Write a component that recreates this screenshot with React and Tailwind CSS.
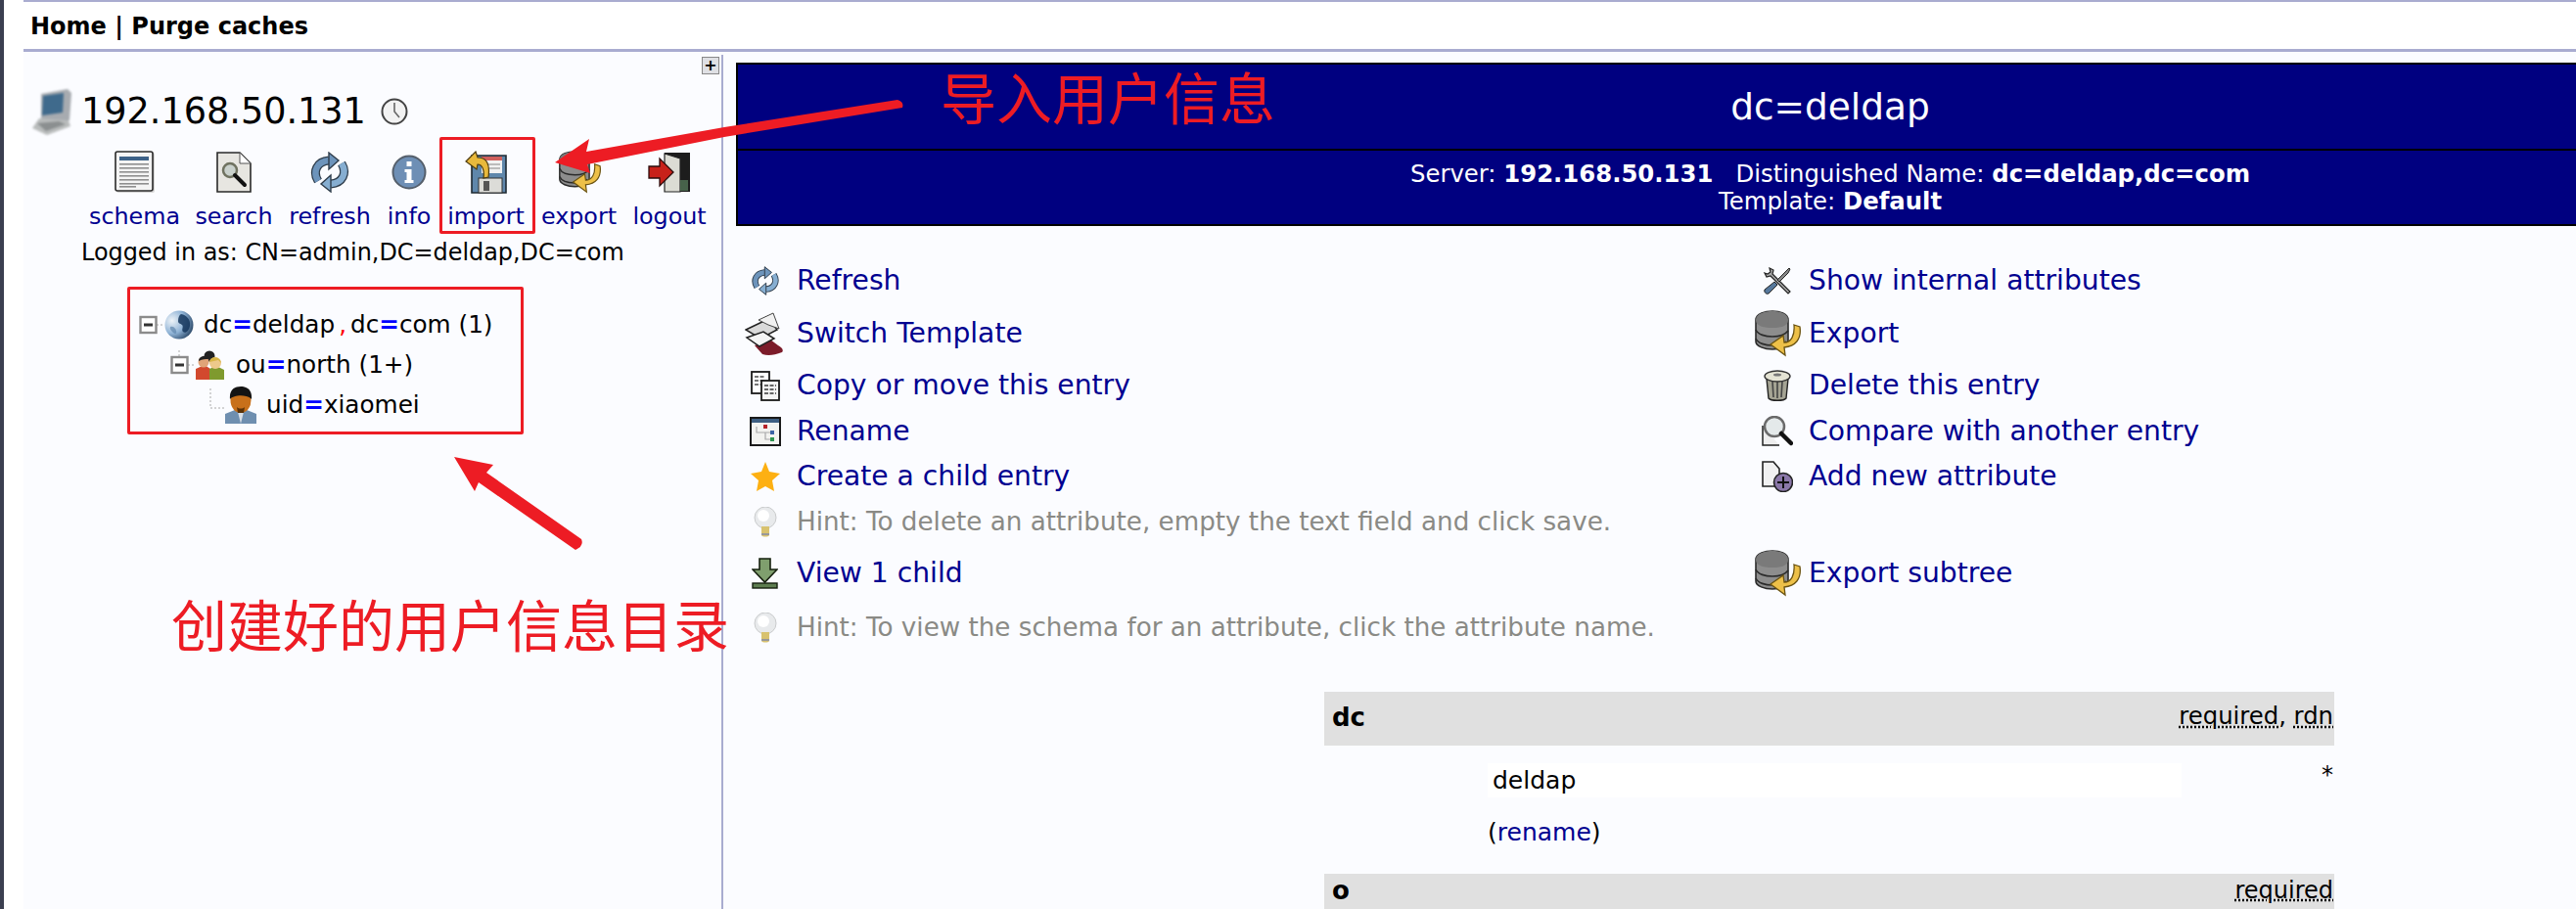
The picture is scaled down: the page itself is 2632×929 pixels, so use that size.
const red = '#ed1c24';

const Schema = () => (
  <svg width="42" height="44" viewBox="0 0 42 44">
    <rect x="2" y="2" width="39" height="41" rx="2" fill="#d8d8d8" />
    <rect x="1" y="1" width="38" height="40" rx="2" fill="#f4f4f4" stroke="#2a2a2a" strokeWidth="1.6" />
    <rect x="5" y="6" width="30" height="4" fill="#3d6288" />
    {[13, 17, 21, 25, 29, 33].map(y => <rect key={y} x="5" y={y} width="30" height="1.6" fill="#8f8f8f" />)}
    <rect x="5" y="36" width="17" height="1.6" fill="#8f8f8f" />
  </svg>
);

const Search = () => (
  <svg width="38" height="44" viewBox="0 0 38 44">
    <path d="M2 2h23l11 11v29H2z" fill="#e7e6e1" stroke="#2a2a2a" strokeWidth="1.6" />
    <path d="M25 2v11h11z" fill="#fff" stroke="#555" strokeWidth="1" />
    <circle cx="15" cy="20" r="7" fill="#c9d1cc" stroke="#6f7260" strokeWidth="2.5" />
    <path d="M20 25l10 10" stroke="#111" strokeWidth="4" strokeLinecap="round" />
  </svg>
);

const Refresh = ({ size = 42 }) => (
  <svg width={size} height={size} viewBox="0 0 42 42">
    <g fill="none" strokeLinecap="butt">
      <path d="M9 30C3 20 8 10 20 9" stroke="#2f3d4b" strokeWidth="9" />
      <path d="M33 12C39 22 34 32 22 33" stroke="#2f3d4b" strokeWidth="9" />
      <path d="M9 30C3 20 8 10 20 9" stroke="#6d94bb" strokeWidth="6.500" />
      <path d="M33 12C39 22 34 32 22 33" stroke="#86aed1" strokeWidth="6.500" />
    </g>
    <path d="M20 1l10 8-10 9z" fill="#6d94bb" stroke="#2f3d4b" strokeWidth="1.4" />
    <path d="M22 24l-10 9 10 8z" fill="#86aed1" stroke="#2f3d4b" strokeWidth="1.4" />
  </svg>
);

const Info = () => (
  <svg width="36" height="36" viewBox="0 0 36 36">
    <circle cx="18" cy="18" r="16.5" fill="#6e8fb5" stroke="#555f6b" strokeWidth="2" />
    <rect x="15.500" y="7" width="5" height="5" fill="#fff" />
    <path d="M13.500 15h7v11h2v3h-9v-3h2v-8h-2z" fill="#fff" />
  </svg>
);

const Import = () => (
  <svg width="44" height="44" viewBox="0 0 44 44">
    <path d="M7 5h35v38H7z" fill="#5f87ab" stroke="#1f2a33" strokeWidth="1.6" />
    <rect x="17" y="6" width="21" height="17" fill="#f2f2f2" />
    <rect x="17" y="6" width="21" height="4" fill="#d0605c" />
    <path d="M19 14h17M19 18h17" stroke="#aaa" strokeWidth="1.4" />
    <rect x="14" y="28" width="24" height="15" fill="#dcdcd8" stroke="#333" />
    <rect x="19" y="31" width="6" height="10" fill="#555" />
    <path d="M1 11L11 1l2 6c9 0 13 6 11 20l-5 1c1-8-1-14-6-14l-1 5z" fill="#e9b93c" stroke="#4d3b10" strokeWidth="1.2" />
  </svg>
);

// database cylinder with the yellow arrow, used in toolbar and action list
const Export = ({ size = 44 }) => (
  <svg width={size} height={size} viewBox="0 0 48 48">
    <path d="M2 10C2 3 12 1 19 1s16 2 16 9v22c0 5-8 8-16 8S2 37 2 32z" fill="#8d8d8d" stroke="#2b2b2b" strokeWidth="1.6" />
    <path d="M2 20c2 5 10 7 17 7s13-2 16-6M2 29c2 5 10 7 17 7s11-1 14-4" fill="none" stroke="#2b2b2b" strokeWidth="1.6" />
    <path d="M2 10c0-7 10-9 17-9s16 2 16 9-9 8-16 8S2 17 2 10z" fill="#7a7a7a" />
    <path d="M41 15l6 2c2 13-5 20-16 21l1 8-15-11 13-9 1 7c7 0 11-7 10-18z" fill="#edc048" stroke="#6a5312" strokeWidth="1.3" />
  </svg>
);

const Logout = () => (
  <svg width="44" height="44" viewBox="0 0 44 44">
    <rect x="17" y="2" width="26" height="40" fill="#1d1d1d" />
    <path d="M17 3l16 5v34H17z" fill="#dcdcd4" stroke="#222" strokeWidth="1.2" />
    <path d="M33 30h8v11h-8z" fill="#47624a" />
    <path d="M1 16h11V8l14 14-14 14v-8H1z" fill="#c8211a" stroke="#2a0c0c" strokeWidth="1.3" />
  </svg>
);

const Computer = () => (
  <svg width="42" height="48" viewBox="0 0 42 48" className="blur-[1px]">
    <path d="M10 6l27-5 4 4-2 28-29 2z" fill="#a7abb0" />
    <path d="M12 8l21-3-1 20-21 3z" fill="#3f6a8c" />
    <path d="M8 31l30 2 2 6-24 9L1 41z" fill="#b9bcbc" />
    <path d="M6 36l22-2 7 3-20 7z" fill="#8b8f90" />
  </svg>
);

const Clock = () => (
  <svg width="28" height="28" viewBox="0 0 28 28">
    <circle cx="14" cy="14" r="12.500" fill="#f2f2f2" stroke="#444" strokeWidth="2" />
    <path d="M14 5v9l5 6" fill="none" stroke="#666" strokeWidth="1.6" />
  </svg>
);

const Expander = ({ stem }) => (
  <svg width="26" height="30" viewBox="0 0 26 30" className="shrink-0">
    {stem && <path d="M9 0v7" stroke="#aaa" strokeDasharray="2 2" />}
    <path d="M18 15h8" stroke="#aaa" strokeDasharray="2 2" />
    <rect x="1.500" y="7" width="16" height="16" fill="#fff" stroke="#8b8b8b" strokeWidth="2.400" />
    <rect x="5" y="13.500" width="9" height="3" fill="#333" />
  </svg>
);

const Globe = () => (
  <svg width="30" height="30" viewBox="0 0 30 30" className="shrink-0 blur-[0.6px]">
    <defs>
      <radialGradient id="globe" cx="0.25" cy="0.35" r="0.9">
        <stop offset="0" stopColor="#eef3f8" />
        <stop offset="0.5" stopColor="#8fb3d6" />
        <stop offset="1" stopColor="#0f2a4a" />
      </radialGradient>
    </defs>
    <circle cx="15" cy="15" r="14.500" fill="url(#globe)" />
    <path d="M17 4c6 1 10 6 9 12s-5 8-7 6 1-5-1-7-4-1-4-4 1-6 3-7z" fill="#14355c" opacity="0.85" />
    <path d="M6 17c3-1 5 1 6 4s-1 4-3 2-4-4-3-6z" fill="#5f86ad" opacity="0.7" />
  </svg>
);

const Group = () => (
  <svg width="29" height="30" viewBox="0 0 29 30" className="shrink-0 blur-[0.4px]">
    <circle cx="14" cy="6" r="5.500" fill="#222" />
    <path d="M0 30V19l9-4 6 4v11z" fill="#d2492e" />
    <path d="M14 30V19l7-3 8 4v10z" fill="#7f9a2e" />
    <circle cx="8" cy="12" r="5.500" fill="#e0a478" />
    <path d="M3 11c0-5 8-7 10-2-3 0-6 0-10 2z" fill="#222" />
    <circle cx="20" cy="13" r="6" fill="#edc98b" />
    <path d="M14 12c0-6 11-7 12 1l-3-3c-3 1-6 1-9 2z" fill="#d8b545" />
  </svg>
);

const Person = () => (
  <svg width="32" height="38" viewBox="0 0 32 38" className="shrink-0">
    <path d="M0 38V28l10-4h12l10 4v10z" fill="#6f8fb0" />
    <path d="M13 26h6l-3 12z" fill="#d9dfe6" />
    <ellipse cx="16" cy="14" rx="10.500" ry="13" fill="#c8701a" />
    <path d="M5 13C4 3 10 0 16 0s12 3 11 13c-4-5-18-5-22 0z" fill="#141414" />
    <path d="M12 21c2 2 6 2 8 0l-1 6h-6z" fill="#5a3208" />
  </svg>
);

const SwitchIcon = () => (
  <svg width="42" height="45" viewBox="0 0 42 45">
    <path d="M10 34l16-6 8 6c4 2 6 5 4 7-8 3-14 4-20 2z" fill="#7c1c2a" />
    <path d="M1 18L24 7l9 11-17 9z" fill="#d9d9d9" stroke="#222" strokeWidth="1.500" />
    <path d="M14 8L29 1l6 16-11-4z" fill="#f1f1f1" stroke="#444" />
    <path d="M2 26l17-6 11 7-15 8z" fill="#f4f4f4" stroke="#222" strokeWidth="1.500" />
  </svg>
);

const Copy = () => (
  <svg width="30" height="31" viewBox="0 0 30 31">
    <rect x="1" y="1" width="18" height="22" fill="#fff" stroke="#1a1a1a" strokeWidth="1.800" />
    <path d="M4 6h11M4 10h11M4 14h11" stroke="#777" strokeWidth="2" strokeDasharray="4 1.5" />
    <rect x="11" y="10" width="18" height="20" fill="#f4f4f4" stroke="#1a1a1a" strokeWidth="1.800" />
    <path d="M14 15h12M14 19h12M14 23h12" stroke="#666" strokeWidth="2" strokeDasharray="4 1.5" />
  </svg>
);

const Rename = () => (
  <svg width="32" height="30" viewBox="0 0 32 30">
    <rect x="1" y="1" width="30" height="28" fill="#f3f3f0" stroke="#1a1a1a" strokeWidth="2" />
    <rect x="2" y="2" width="28" height="4" fill="#3e5f82" />
    <path d="M7 10v6h9v7h7M16 16h7" fill="none" stroke="#aaa" strokeWidth="1.200" />
    <rect x="14" y="8" width="4" height="4" fill="#b5232a" />
    <rect x="21" y="14" width="4" height="4" fill="#3c64a5" />
    <rect x="21" y="21" width="4" height="4" fill="#2f9650" />
  </svg>
);

const Star = () => (
  <svg width="30" height="30" viewBox="0 0 30 30">
    <path d="M15 0l4 10 11 2-8 7 2 11-9-5-9 5 2-11-8-7 11-2z" fill="#fdb012" />
  </svg>
);

const Bulb = () => (
  <svg width="24" height="32" viewBox="0 0 24 32">
    <circle cx="12" cy="11" r="11" fill="#e8eaec" stroke="#c9cbcc" />
    <circle cx="10" cy="9" r="6" fill="#fff" />
    <path d="M8 20h8v9c-1 2-7 2-8 0z" fill="#d8c26f" />
    <path d="M8 28h8" stroke="#999" strokeWidth="2" />
  </svg>
);

const ViewChild = () => (
  <svg width="27" height="32" viewBox="0 0 27 32">
    <path d="M8 1h11v11h7L13.500 25 1 12h7z" fill="#7f9f6e" stroke="#16200f" strokeWidth="1.600" />
    <rect x="1" y="26" width="25" height="5" fill="#5d7d50" stroke="#16200f" strokeWidth="1.400" />
  </svg>
);

const Tools = () => (
  <svg width="30" height="30" viewBox="0 0 30 30">
    <path d="M7 2l4 2-1 4 18 18-2 2L8 10l-4 1-2-4 3 1 3-2z" fill="#aaa" stroke="#222" strokeWidth="1.200" />
    <path d="M28 3l-1-1-3 3-9 9 2 2 9-9z" fill="#888" stroke="#222" />
    <path d="M12 16l3 3-9 9c-2 1-5-1-4-4z" fill="#56789c" stroke="#222" />
  </svg>
);

const Trash = () => (
  <svg width="28" height="32" viewBox="0 0 28 32">
    <path d="M3 9h22l-2 20c-2 3-16 3-18 0z" fill="#a5a494" stroke="#222" strokeWidth="1.400" />
    <path d="M9 12l1 16M14 12v17M19 12l-1 16" stroke="#444" strokeWidth="1.600" />
    <ellipse cx="14" cy="6.500" rx="13" ry="5.500" fill="#e4e3d3" stroke="#333" strokeWidth="1.400" />
    <ellipse cx="14" cy="5" rx="4" ry="1.500" fill="#777" />
  </svg>
);

const Compare = () => (
  <svg width="32" height="32" viewBox="0 0 32 32">
    <path d="M1 10v20h17" fill="#eee" stroke="#222" strokeWidth="1.500" />
    <circle cx="13" cy="11" r="10" fill="#e4e9ea" stroke="#6a6a6a" strokeWidth="2.500" />
    <path d="M20 18l10 10" stroke="#111" strokeWidth="4.500" strokeLinecap="round" />
  </svg>
);

const AddAttr = () => (
  <svg width="32" height="32" viewBox="0 0 32 32">
    <path d="M1 1h11l6 7v18H1z" fill="#f1f1f1" stroke="#222" strokeWidth="1.600" />
    <circle cx="22" cy="22" r="9.500" fill="#8a77a8" stroke="#222" strokeWidth="1.600" />
    <path d="M22 16v12M16 22h12" stroke="#111" strokeWidth="2" />
  </svg>
);

const Connector = () => (
  <svg width="16" height="24" viewBox="0 0 16 24" className="shrink-0 mb-[10px]">
    <path d="M1 0v20h15" fill="none" stroke="#aaa" strokeDasharray="2 2" />
  </svg>
);

const tools = [
  { label: 'schema', icon: <Schema />, w: 'w-[91px]' },
  { label: 'search', icon: <Search />, w: 'w-[78px]' },
  { label: 'refresh', icon: <Refresh />, w: 'w-[84px]' },
  { label: 'info', icon: <Info />, w: 'w-[44px]' },
  { label: 'import', icon: <Import />, w: 'w-[79px]' },
  { label: 'export', icon: <Export />, w: 'w-[77px]' },
  { label: 'logout', icon: <Logout />, w: 'w-[74px]' },
];

const actions = [
  { h: 'h-[54px]', left: ['Refresh', <Refresh size={30} />], right: ['Show internal attributes', <Tools />] },
  { h: 'h-[54px]', left: ['Switch Template', <SwitchIcon />], right: ['Export', <Export size={48} />] },
  { h: 'h-[52px]', left: ['Copy or move this entry', <Copy />], right: ['Delete this entry', <Trash />] },
  { h: 'h-[40px]', left: ['Rename', <Rename />], right: ['Compare with another entry', <Compare />] },
  { h: 'h-[54px]', left: ['Create a child entry', <Star />], right: ['Add new attribute', <AddAttr />] },
  { h: 'h-[36px]', left: ['Hint: To delete an attribute, empty the text field and click save.', <Bulb />], hint: true },
  { h: 'h-[72px]', left: ['View 1 child', <ViewChild />], right: ['Export subtree', <Export size={48} />] },
  { h: 'h-[38px]', left: ['Hint: To view the schema for an attribute, click the attribute name.', <Bulb />], hint: true },
];

const Eq = () => <span className="text-[#0000ff] font-bold">=</span>;

const Action = ({ item, hint }) => (
  <div className="flex items-center">
    <div className="w-[65px] flex justify-center shrink-0 blur-[0.4px]">{item[1]}</div>
    <span className={hint ? 'text-[26.200px] text-[#8a8a85]' : 'text-[28.200px] text-[#000090]'}>{item[0]}</span>
  </div>
);

export default function App() {
  return (
    <div className="relative w-[2632px] h-[929px] overflow-hidden bg-white text-black font-['DejaVu_Sans','Noto_Sans_CJK_SC',sans-serif] flex">
      <div className="w-[4px] bg-[#3b3f50] shrink-0" />
      <div className="w-[20px] shrink-0" />

      <div className="flex-1 flex flex-col min-w-0">
        <div className="h-[2px] bg-[#a9acd0] shrink-0" />
        <div className="h-[48px] flex items-center pl-[7px] pt-[2px] font-bold text-[24px] shrink-0">Home | Purge caches</div>
        <div className="h-[3px] bg-[#a9acd0] shrink-0" />

        <div className="flex-1 flex bg-[#fbfcff] min-h-0">
          {/* left tree panel */}
          <div className="w-[715px] shrink-0 border-r-2 border-[#a9acd0] mt-[3px]">
            <div className="flex justify-end pr-[2px] mt-[2px]">
              <div className="w-[18px] h-[18px] bg-[#dfe0e4] border border-[#888] flex items-center justify-center text-[16px] font-bold leading-none">+</div>
            </div>
            <div className="flex items-center h-[48px] mt-[14px] pl-[8px]">
              <Computer />
              <span className="text-[36.600px] ml-[9px]">192.168.50.131</span>
              <span className="ml-[15px] flex"><Clock /></span>
            </div>
            <div className="flex gap-[17px] pl-[68px] mt-[16px]">
              {tools.map(t => (
                <div key={t.label} className={`flex flex-col items-center ${t.w}`}>
                  <div className="h-[44px] flex items-center justify-center blur-[0.4px]">{t.icon}</div>
                  <div className="h-[48px] flex items-center text-[23.800px] text-[#000090]">{t.label}</div>
                </div>
              ))}
            </div>
            <div className="h-[26px] flex items-center pl-[59px] text-[23.900px] whitespace-nowrap">Logged in as: CN=admin,DC=deldap,DC=com</div>

            <div className="mt-[40px] text-[24.700px]">
              <div className="h-[40px] flex items-center pl-[118px]">
                <Expander />
                <Globe />
                <span className="ml-[10px]">dc<Eq />deldap<span className="text-[#ff0000] mx-[4px]">,</span>dc<Eq />com (1)</span>
              </div>
              <div className="h-[41px] flex items-center pl-[150px]">
                <Expander stem />
                <Group />
                <span className="ml-[12px]">ou<Eq />north (1+)</span>
              </div>
              <div className="h-[42px] flex items-center pl-[190px]">
                <Connector />
                <Person />
                <span className="ml-[10px]">uid<Eq />xiaomei</span>
              </div>
            </div>
          </div>

          {/* right entry panel */}
          <div className="flex-1 min-w-0 pl-[13px] pt-[11px]">
            <div className="w-[2236px] border-2 border-black bg-[#000080] text-white text-center">
              <div className="h-[88px] flex items-center justify-center text-[37.500px] border-b-2 border-black">dc=deldap</div>
              <div className="h-[75px] flex flex-col justify-center text-[24.350px] leading-[28px]">
                <div>Server: <b>192.168.50.131</b> &nbsp; Distinguished Name: <b>dc=deldap,dc=com</b></div>
                <div>Template: <b>Default</b></div>
              </div>
            </div>

            <div className="mt-[29px] -ml-[3px]">
              {actions.map((a, i) => (
                <div key={i} className={`grid grid-cols-[1034px_1fr] ${a.h}`}>
                  <Action item={a.left} hint={a.hint} />
                  {a.right ? <Action item={a.right} /> : <div />}
                </div>
              ))}
            </div>

            <div className="mt-[47px] ml-[601px] w-[1032px]">
              <div className="h-[55px] bg-[#e0e0e0] flex items-center justify-between px-[8px] pr-[1px] pb-[4px]">
                <span className="font-bold text-[26px] leading-none">dc</span>
                <span className="text-[24.300px] leading-none">
                  <span className="underline decoration-dotted">required</span>, <span className="underline decoration-dotted">rdn</span>
                </span>
              </div>
              <div className="h-[131px] pt-[18px] pl-[167px] pr-[1px]">
                <div className="flex justify-between">
                  <div className="w-[709px] h-[35px] bg-white flex items-center pl-[5px] text-[25px]">deldap</div>
                  <span className="text-[24px] leading-none">*</span>
                </div>
                <div className="mt-[17px] text-[25px] leading-[37px]">(<span className="text-[#000090]">rename</span>)</div>
              </div>
              <div className="h-[36px] bg-[#e0e0e0] flex items-center justify-between pl-[8px] pr-[1px] pb-[3px]">
                <span className="font-bold text-[26px] leading-none">o</span>
                <span className="text-[24px] leading-none underline decoration-dotted">required</span>
              </div>
            </div>
          </div>
        </div>
      </div>

      {/* screenshot annotations */}
      <div className="absolute left-[449px] top-[140px] w-[98px] h-[99px] border-[3px] border-[#ed1c24] rounded-[2px]" />
      <div className="absolute left-[130px] top-[293px] w-[405px] h-[151px] border-[3px] border-[#ed1c24] rounded-[2px]" />
      <svg className="absolute left-0 top-0" width="2632" height="929" viewBox="0 0 2632 929">
        <path d="M567 166L602 142L599 155L740 130L917 102Q924 104 922 110L740 140L600 168L603 177Z" fill={red} />
        <path d="M464 467L504 475L497 483L594 551Q597 558 588 562L489 493L485 502Z" fill={red} />
      </svg>
      <div className="absolute left-[961px] top-[62px] text-[57px] leading-[70px] whitespace-nowrap text-[#ed1c24] font-['Noto_Sans_CJK_SC',sans-serif]">导入用户信息</div>
      <div className="absolute left-[175px] top-[601px] text-[57px] leading-[70px] whitespace-nowrap text-[#ed1c24] font-['Noto_Sans_CJK_SC',sans-serif]">创建好的用户信息目录</div>
    </div>
  );
}
